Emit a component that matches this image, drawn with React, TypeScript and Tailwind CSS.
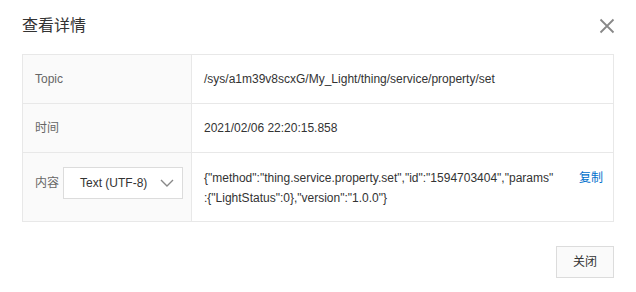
import React from "react";

const font = {
  fontFamily: '"Liberation Sans", "Noto Sans CJK SC", sans-serif',
};

function Row({
  label,
  children,
  last,
  tall,
}: {
  label: React.ReactNode;
  children: React.ReactNode;
  last?: boolean;
  tall?: boolean;
}) {
  return (
    <div className={`flex ${last ? "" : "border-b border-[#e8e8e8]"}`}>
      <div
        className={`w-[169px] shrink-0 bg-[#fafafa] border-r border-[#e8e8e8] pl-3 text-[#666] flex ${
          tall ? "items-start pt-[14px] h-[68px]" : "items-center h-[48px]"
        }`}
      >
        {label}
      </div>
      <div className="flex-1 flex items-center pl-3 text-[#333]">{children}</div>
    </div>
  );
}

export default function App() {
  return (
    <div className="w-[636px] h-[292px] bg-white text-[12px]" style={font}>
      <div className="px-[22px]">
        <div className="flex items-center justify-between pt-[14px] h-[38px]">
          <div className="text-[16px] leading-6 text-[#333]">查看详情</div>
          <svg width="16" height="16" viewBox="0 0 16 16" className="mr-[-1px]">
            <path d="M1.5 1.5 L14.5 14.5 M14.5 1.5 L1.5 14.5" stroke="#888" strokeWidth="1.8" />
          </svg>
        </div>

        <div className="mt-4 border border-[#e8e8e8]">
          <Row label="Topic">/sys/a1m39v8scxG/My_Light/thing/service/property/set</Row>
          <Row label="时间">2021/02/06 22:20:15.858</Row>
          <Row
            last
            tall
            label={
              <div className="flex items-center gap-[4px]">
                <span className="leading-8">内容</span>
                <div className="w-[120px] h-8 border border-[#dcdcdc] bg-white flex items-center justify-between pl-4 pr-[8px] text-[#333] text-[12px]">
                  <span>Text (UTF-8)</span>
                  <svg width="14" height="8" viewBox="0 0 14 8">
                    <path d="M1 1 L7 7 L13 1" fill="none" stroke="#888" strokeWidth="1.4" />
                  </svg>
                </div>
              </div>
            }
          >
            <div className="flex-1 flex items-start justify-between pr-[10px] mt-[2px]">
              <div className="leading-5">
                <div>{'{"method":"thing.service.property.set","id":"1594703404","params"'}</div>
                <div>{':{"LightStatus":0},"version":"1.0.0"}'}</div>
              </div>
              <span className="text-[#0070cc] leading-5">复制</span>
            </div>
          </Row>
        </div>

        <div className="flex justify-end mt-6">
          <button className="w-[58px] h-8 border border-[#dcdcdc] bg-[#fafafa] text-[#333] text-[12px]">
            关闭
          </button>
        </div>
      </div>
    </div>
  );
}
